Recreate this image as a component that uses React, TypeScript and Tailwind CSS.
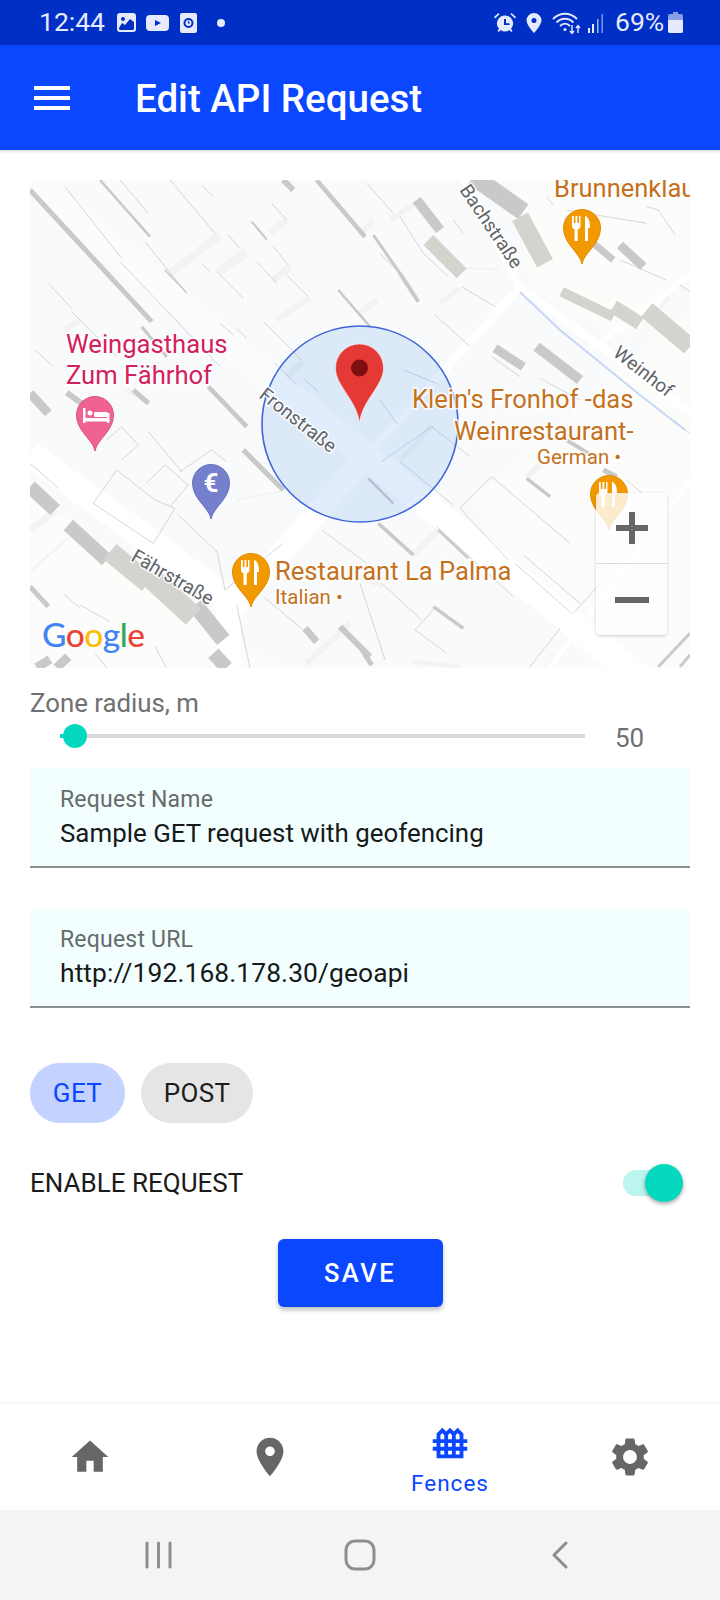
import React from "react";

// Map geometry is noted in each reference crop's own coordinates and converted to map space.
type L = [number, number, number, number, number?];
const conv = (ox: number, oy: number) => (l: L): L => [l[0] / 3 + ox, l[1] / 3 + oy, l[2] / 3 + ox, l[3] / 3 + oy, l[4]];
const tl = conv(-10, -10), tr = conv(330, -10), bl = conv(-10, 240), br = conv(330, 240);

const softRoads: L[] = [[0, 0, 240, 198, 26]];
const roads: L[] = [
  [240, 198, 610, 498, 26],
  [0, 274, 205, 424, 26],
  [200, 432, 342, 270, 22],
  [342, 270, 490, 107, 8],
  [490, 107, 432, -5, 8],
  [490, 107, 670, 240, 8],
  [560, 170, 660, 95, 5],
  [197, 420, 200, 490, 24],
  [660, 300, 520, 488, 4],
];
const walls: L[] = [
  ...[[450, 310, 600, 195, 8], [595, 305, 680, 245, 9], [750, 190, 800, 150, 7], [760, 330, 810, 290, 7], [770, 450, 870, 385, 6], [130, 480, 180, 450, 6], [320, 660, 390, 700, 5], [800, 620, 850, 575, 6]].map((l) => tl(l as L)),
  ...[[0, 195, 40, 150, 6], [50, 390, 0, 430, 6], [180, 90, 90, 150, 5], [300, 355, 240, 400, 5], [305, 295, 420, 298, 2], [890, 430, 925, 380, 4]].map((l) => tr(l as L)),
  ...[[30, 330, 110, 270, 7], [860, 730, 990, 610, 6], [35, 450, 150, 350, 2], [650, 240, 780, 215, 2]].map((l) => bl(l as L)),
  ...[[160, 405, 235, 330, 6], [500, 170, 540, 135, 6], [120, 120, 215, 20, 5], [0, 470, 70, 500, 5], [160, 725, 300, 740, 4]].map((l) => br(l as L)),
];
const thin: L[] = [
  ...[[135, 50, 305, 265], [300, 30, 385, 130], [450, 30, 585, 190], [375, 215, 500, 370], [545, 280, 570, 305], [590, 305, 670, 385], [625, 195, 660, 235], [730, 455, 845, 570], [800, 315, 865, 380], [710, 275, 770, 340], [760, 230, 805, 285], [695, 155, 740, 210], [755, 100, 800, 150], [300, 275, 600, 590], [85, 340, 155, 415], [155, 425, 290, 560], [45, 540, 95, 585], [850, 625, 895, 665], [765, 580, 830, 645], [545, 45, 580, 80], [600, 460, 640, 495], [650, 475, 680, 505]].map((l) => tl(l as L)),
  ...[[20, 40, 100, 130], [120, 140, 190, 250], [190, 250, 265, 320], [60, 250, 120, 310], [280, 150, 310, 190], [305, 350, 405, 410], [225, 435, 330, 530], [395, 560, 480, 620], [895, 120, 945, 195], [780, 270, 920, 330], [620, 120, 860, 160], [560, 80, 580, 105], [960, 345, 990, 365], [60, 690, 110, 760], [540, 625, 660, 690], [130, 600, 230, 640], [860, 110, 895, 120]].map((l) => tr(l as L)),
  ...[[30, 130, 115, 205], [220, 250, 290, 150], [290, 150, 405, 240], [405, 240, 465, 265], [220, 250, 400, 370], [400, 370, 465, 265], [378, 190, 435, 135], [435, 135, 505, 195], [505, 195, 450, 260], [470, 280, 590, 395], [385, 35, 485, 155], [480, 155, 575, 90], [575, 90, 620, 125], [260, 60, 305, 20], [305, 20, 355, 75], [305, 120, 355, 75], [130, 520, 180, 565], [180, 555, 270, 605], [905, 330, 1040, 430], [730, 530, 850, 630], [405, 680, 440, 743], [225, 700, 260, 743], [650, 555, 690, 743], [590, 390, 615, 510], [615, 510, 790, 370]].map((l) => bl(l as L)),
  ...[[65, 125, 215, 20], [215, 20, 330, 110], [120, 125, 280, 255], [395, 170, 630, 370], [300, 265, 395, 170], [490, 405, 660, 550], [465, 430, 635, 580], [640, 580, 900, 290], [165, 630, 260, 700], [65, 490, 185, 600], [0, 490, 75, 720], [600, 625, 510, 740], [300, 265, 445, 420], [230, 320, 460, 530], [165, 630, 220, 570], [940, 0, 990, 40], [800, 180, 910, 275]].map((l) => br(l as L)),
];
const shadows: [string, L[]][] = [
  ["#c8c9c8", [
    ...[[30, 60, 395, 455, 5], [240, 30, 390, 200, 2.5], [890, 30, 1035, 200, 4.5], [565, 650, 680, 770, 4.5], [955, 360, 1050, 470, 2.5], [30, 670, 85, 730, 9], [790, 30, 820, 60, 6], [695, 155, 740, 208, 2], [435, 300, 500, 368, 1.5], [365, 470, 440, 560, 3], [140, 668, 185, 700, 6], [340, 660, 385, 700, 5]].map((l) => tl(l as L)),
    ...[[170, 90, 240, 180, 10], [40, 195, 120, 310, 3], [120, 310, 175, 395, 4], [340, 20, 490, 125, 18], [405, 535, 490, 590, 9], [530, 530, 660, 630, 10], [700, 220, 760, 270, 7], [780, 225, 850, 290, 9]].map((l) => tr(l as L)),
    ...[[30, 200, 105, 270, 14], [145, 315, 260, 420, 14], [525, 555, 610, 660, 16], [580, 700, 620, 743, 14], [30, 500, 85, 560, 5], [670, 90, 790, 210, 5], [855, 625, 890, 665, 7], [960, 620, 1050, 710, 6], [50, 743, 90, 718, 9], [110, 743, 145, 710, 9]].map((l) => bl(l as L)),
    ...[[25, 175, 100, 250, 2.5], [55, 310, 160, 405, 3.5], [235, 330, 325, 415, 2.5], [220, 560, 310, 625, 3.5], [500, 175, 570, 230, 3.5], [730, 150, 770, 170, 5], [0, 680, 35, 735, 5], [895, 740, 990, 640, 3], [960, 740, 990, 705, 3], [620, 60, 700, 110, 4]].map((l) => br(l as L)),
  ]],
  ["#d5d3ce", [
    ...[[205, 210, 305, 310, 14], [480, 140, 555, 280, 18], [605, 365, 760, 440, 10], [760, 410, 840, 460, 14], [860, 420, 990, 530, 18]].map((l) => tr(l as L)),
    ...[[270, 395, 385, 490, 20], [390, 470, 520, 590, 22]].map((l) => bl(l as L)),
  ]],
];

function Pin({ x, y, tip, fill, edge, children }: { x: number; y: number; tip: number; fill: string; edge: string; children?: React.ReactNode }) {
  const r = 18.5;
  const h = tip - y;
  return (
    <g>
      <path
        d={`M${x} ${tip}C${x - 2} ${y + h * 0.68} ${x - r} ${y + h * 0.45} ${x - r} ${y}a${r} ${r} 0 0 1 ${2 * r} 0C${x + r} ${y + h * 0.45} ${x + 2} ${y + h * 0.68} ${x} ${tip}Z`}
        fill={fill}
        stroke={edge}
        strokeWidth="1"
      />
      {children}
    </g>
  );
}

const Fork = ({ x, y }: { x: number; y: number }) => (
  <g fill="#fff" transform={`translate(${x} ${y})`}>
    <path d="M-10-12h1.8v7h1.7v-7h1.8v7h1.7v-7h1.5v10c0 2-1.2 3-2.8 3.3V13h-3.2V1.3C-8.8 1-10 0-10-2Z" />
    <path d="M3-12c4 1 5 6 5 12H6v13H3Z" />
  </g>
);

function Label({ x, y, size, fill, rot, children, weight = 400 }: { x: number; y: number; size: number; fill: string; rot?: number; weight?: number; children: React.ReactNode }) {
  return (
    <text
      x={x}
      y={y}
      fontSize={size}
      fontWeight={weight}
      fill={fill}
      stroke="#fff"
      strokeWidth="3"
      strokeOpacity="0.85"
      paintOrder="stroke"
      fontFamily="Roboto, sans-serif"
      transform={rot ? `rotate(${rot} ${x} ${y})` : undefined}
    >
      {children}
    </text>
  );
}

function MapArt() {
  const drawLines = (ls: L[], stroke: string, w = 1) =>
    ls.map((l, i) => <line key={i} x1={l[0]} y1={l[1]} x2={l[2]} y2={l[3]} stroke={stroke} strokeWidth={l[4] ?? w} />);
  return (
    <svg viewBox="0 0 660 488" width="660" height="488" className="block">
      <rect width="660" height="488" fill="#f9fafb" />
      <path d="M0 310L200 460 260 488H0ZM440 320L660 130V488H560Z" fill="#fcfcfb" />
      <path d="M480 0H660V90L600 160 500 110Z" fill="#fcfcfa" />
      {drawLines(softRoads, "#fcfcfd")}
      {drawLines(roads, "#ffffff")}
      {drawLines(walls, "#f2f3f2")}
      {drawLines(thin, "#c2c5c7", 0.7)}
      {shadows.map(([c, ls]) => <g key={c}>{drawLines(ls, c)}</g>)}
      <path d="M490 112L530 150 610 215 655 250" fill="none" stroke="#c6d7f5" strokeWidth="2" />

      <circle cx="330" cy="244" r="98" fill="#69a5f5" fillOpacity="0.2" stroke="#3f66d9" strokeWidth="1.6" />
      <path d="M329.5 243C327 220 305.5 206 305.5 188a24 24 0 0 1 48 0C353.5 206 332 220 329.5 243Z" fill="#e53935" stroke="#fff" strokeOpacity="0.5" strokeWidth="1" />
      <circle cx="329.5" cy="188" r="8.500" fill="#7d0f0f" />

      <Label x={36} y={173} size={25.6} fill="#d3215e">Weingasthaus</Label>
      <Label x={36} y={204} size={25.6} fill="#d3215e">Zum Fährhof</Label>
      <Label x={524} y={17} size={25.5} fill="#c5711c">Brunnenklau</Label>
      <Label x={382} y={228} size={25.6} fill="#c5711c">Klein's Fronhof -das</Label>
      <Label x={424} y={260} size={25.6} fill="#c5711c">Weinrestaurant-</Label>
      <Label x={507} y={284} size={20.5} fill="#c5711c">German •</Label>
      <Label x={245} y={400} size={25.6} fill="#c5711c">Restaurant La Palma</Label>
      <Label x={245} y={424} size={20.5} fill="#c5711c">Italian •</Label>

      <Label x={228} y={217} size={19} fill="#5f6368" rot={38}>Fronstraße</Label>
      <Label x={429} y={10} size={19} fill="#5f6368" rot={56}>Bachstraße</Label>
      <Label x={582} y={175} size={19} fill="#5f6368" rot={38}>Weinhof</Label>
      <Label x={100} y={380} size={19} fill="#5f6368" rot={30}>Fährstraße</Label>

      <Pin x={65} y={235} tip={271} fill="#f06292" edge="#d9537f">
        <g fill="#fff">
          <rect x={53} y={228} width={2.5} height={15} />
          <rect x={77} y={233} width={2.5} height={10} />
          <rect x={53} y={238} width={26} height={3.5} />
          <circle cx={60} cy={233} r={2.5} />
          <rect x={64} y={232} width={14} height={5} rx={1.5} />
        </g>
      </Pin>
      <Pin x={181} y={303} tip={339} fill="#7580cc" edge="#6670bd">
        <text x={181} y={312} textAnchor="middle" fontSize="26" fontWeight="700" fill="#fff" fontFamily="Roboto, sans-serif">€</text>
      </Pin>
      <Pin x={221} y={392} tip={427} fill="#f29900" edge="#e08c00"><Fork x={221} y={392} /></Pin>
      <Pin x={552} y={48} tip={84} fill="#f29900" edge="#e08c00"><Fork x={552} y={48} /></Pin>
      <Pin x={579} y={314} tip={350} fill="#f29900" edge="#e08c00"><Fork x={579} y={314} /></Pin>

      <text x={12} y={467} fontSize="33.500" fontWeight="500" fontFamily="Lato, Roboto, sans-serif" stroke="#fff" strokeOpacity="0.7" strokeWidth="3" paintOrder="stroke" letterSpacing="-0.5">
        <tspan fill="#4285f4">G</tspan>
        <tspan fill="#ea4335">o</tspan>
        <tspan fill="#fbbc05">o</tspan>
        <tspan fill="#4285f4">g</tspan>
        <tspan fill="#34a853">l</tspan>
        <tspan fill="#ea4335">e</tspan>
      </text>
    </svg>
  );
}

const Path = ({ d, size, fill, className }: { d: string; size: number; fill: string; className?: string }) => (
  <svg viewBox="0 0 24 24" width={size} height={size} fill={fill} className={className}><path d={d} /></svg>
);

const HOME = "M10 20v-6h4v6h5v-8h3L12 3 2 12h3v8z";
const PLACE = "M12 2C8.13 2 5 5.13 5 9c0 5.25 7 13 7 13s7-7.75 7-13c0-3.87-3.13-7-7-7zm0 9.5c-1.38 0-2.5-1.12-2.5-2.5s1.12-2.5 2.5-2.5 2.5 1.12 2.5 2.5-1.12 2.5-2.5 2.5z";
const FENCE = "M21,12v-2h-2V7l-3-3l-2,2l-2-2l-2,2L8,4L5,7v3H3v2h2v2H3v2h2v4h14v-4h2v-2h-2v-2H21z M16,6.83l1,1V10h-2V7.83l0.41-0.41L16,6.83z M12,6.83l1,1V10h-2V7.83L12,6.83z M11,14v-2h2v2H11z M13,16v2h-2v-2H13z M9,12v2H7v-2H9z M9,7.83V10H7V7.83l1-1l0.59,0.59L9,7.83z M7,16h2v2H7V16z M17,18h-2v-2h2V18z M17,14h-2v-2h2V14z";
const GEAR = "M19.14 12.94c.04-.3.06-.61.06-.94 0-.32-.02-.64-.07-.94l2.03-1.58c.18-.14.23-.41.12-.61l-1.92-3.32c-.12-.22-.37-.29-.59-.22l-2.39.96c-.5-.38-1.03-.7-1.62-.94l-.36-2.54c-.04-.24-.24-.41-.48-.41h-3.84c-.24 0-.43.17-.47.41l-.36 2.54c-.59.24-1.13.57-1.62.94l-2.39-.96c-.22-.08-.47 0-.59.22L2.74 8.87c-.12.21-.08.47.12.61l2.03 1.58c-.05.3-.09.63-.09.94s.02.64.07.94l-2.03 1.58c-.18.14-.23.41-.12.61l1.92 3.32c.12.22.37.29.59.22l2.39-.96c.5.38 1.03.7 1.62.94l.36 2.54c.05.24.24.41.48.41h3.84c.24 0 .44-.17.47-.41l.36-2.54c.59-.24 1.13-.56 1.62-.94l2.39.96c.22.08.47 0 .59-.22l1.92-3.32c.12-.22.07-.47-.12-.61l-2.01-1.58zM12 15.6c-1.98 0-3.6-1.62-3.6-3.6s1.62-3.6 3.6-3.6 3.6 1.62 3.6 3.6-1.62 3.6-3.6 3.6z";

function Field({ label, value, wide }: { label: string; value: string; wide?: boolean }) {
  return (
    <div className="h-[100px] rounded-t-[5px] border-b-2 border-[#8a8f8f] bg-[#f3ffff] px-[30px] pt-[19px]">
      <div className="text-[23px] leading-[25px] tracking-[0.2px] text-[#666b6b]">{label}</div>
      <div className={wide ? "mt-[5px] text-[26.4px] leading-[32px] tracking-[0.1px] text-[#161a1a]" : "mt-[5px] text-[25.9px] leading-[32px] text-[#161a1a]"}>{value}</div>
    </div>
  );
}

function StatusBar() {
  const c = "#e6eaff";
  return (
    <div className="flex h-[45px] items-center justify-between bg-[#002fc6] pl-[39px] pr-[37px] text-[26.5px] text-[#e6eaff]">
      <div className="flex items-center">
        <span className="w-[78px] leading-none">12:44</span>
        <svg width="19" height="19" viewBox="0 0 19 19" fill={c}><path fillRule="evenodd" d="M3 0h13a3 3 0 0 1 3 3v13a3 3 0 0 1-3 3H3a3 3 0 0 1-3-3V3a3 3 0 0 1 3-3Zm-1 15v1l1 1h13l1-1V9l-4-3-5 6-3-2Zm4-11a2 2 0 1 0 0 4 2 2 0 0 0 0-4Z" /></svg>
        <svg width="23" height="16" viewBox="0 0 23 16" className="ml-[10px]" fill={c}><path fillRule="evenodd" d="M4 0h15a4 4 0 0 1 4 4v8a4 4 0 0 1-4 4H4a4 4 0 0 1-4-4V4a4 4 0 0 1 4-4Zm5 5v6l6-3Z" /></svg>
        <svg width="17" height="20" viewBox="0 0 17 20" className="ml-[11px]" fill={c}><path fillRule="evenodd" d="M2 0h13a2 2 0 0 1 2 2v16a2 2 0 0 1-2 2H2a2 2 0 0 1-2-2V2a2 2 0 0 1 2-2Zm6.500 5a5 5 0 1 0 0 10 5 5 0 0 0 0-10Zm0 2a3 3 0 1 1 0 6 3 3 0 0 1 0-6Zm-.6 1v2.600h2.200v-1H9V8Z" /></svg>
        <span className="ml-[20px] h-[8px] w-[8px] rounded-full bg-[#e6eaff]" />
      </div>
      <div className="flex items-center">
        <svg width="22" height="22" viewBox="0 0 22 22" fill={c}><path fillRule="evenodd" d="M11 3.500a8 8 0 0 1 6 13.300l1.500 2.200-1.500 1-1.500-2a8 8 0 0 1-9 0L5 20l-1.500-1L5 16.800A8 8 0 0 1 11 3.500Zm-1 3.500v6h5.500v-1.800H12V7ZM1 6.500 5.500 2.200 4.500 1 0 5Zm20 0L16.500 2.200 17.500 1 22 5Z" /></svg>
        <svg width="16" height="22" viewBox="0 0 16 22" className="ml-[10px]" fill={c}><path fillRule="evenodd" d="M8 1a7.500 7.500 0 0 1 7.500 7.500C15.500 13 8 21 8 21S.5 13 .5 8.500A7.500 7.500 0 0 1 8 1Zm0 5a2.500 2.500 0 1 0 0 5 2.500 2.500 0 0 0 0-5Z" /></svg>
        <svg width="30" height="24" viewBox="0 0 30 24" className="ml-[10px]" fill="none" stroke={c} strokeWidth="1.800"><path d="M1 8c7-7 17-7 24 0M4.500 11.500c5-5 12-5 17 0M8 15c3-3 7-3 10 0" /><circle cx="13" cy="18.500" r="1.500" fill={c} stroke="none" /><path d="M20 14v8M18 20l2 2.500 2-2.500M26 22v-7M24 17l2-2.500 2 2.500" strokeWidth="1.400" /></svg>
        <svg width="18" height="20" viewBox="0 0 18 20" className="ml-[6px]" fill={c}><rect x="0" y="15" width="2" height="5" /><rect x="4" y="11" width="2" height="9" /><rect x="9" y="6" width="1.500" height="14" fillOpacity="0.7" /><rect x="13.500" y="1" width="1.500" height="19" fillOpacity="0.55" /></svg>
        <span className="ml-[9px] w-[53px] leading-none">69%</span>
        <svg width="15" height="21" viewBox="0 0 15 21" fill={c}><path d="M5 0h5v2h3a2 2 0 0 1 2 2v15a2 2 0 0 1-2 2H2a2 2 0 0 1-2-2V4a2 2 0 0 1 2-2h3Z" fillOpacity="0.6" /><path d="M0 8h15v11a2 2 0 0 1-2 2H2a2 2 0 0 1-2-2Z" /></svg>
      </div>
    </div>
  );
}

export default function App() {
  return (
    <div className="flex h-[1600px] w-[720px] flex-col overflow-hidden bg-white [font-family:Roboto,sans-serif]">
      <StatusBar />
      <header className="relative z-10 flex h-[105px] items-center bg-[#0a47ff] pl-[34px] shadow-[0_1px_3px_rgba(0,0,0,0.2)]">
        <div className="flex h-[24px] w-[36px] flex-col justify-between">
          <span className="h-[4px] bg-white" />
          <span className="h-[4px] bg-white" />
          <span className="h-[4px] bg-white" />
        </div>
        <h1 className="ml-[65px] mt-[4px] text-[38.5px] font-medium leading-none text-white">Edit API Request</h1>
      </header>

      <main className="flex-1 px-[30px] pt-[30px]">
        <div className="relative h-[488px] w-[660px] overflow-hidden">
          <MapArt />
          <div className="absolute left-[566px] top-[313px] flex h-[142px] w-[71px] flex-col rounded-[4px] bg-white/80 shadow-[0_1px_3px_rgba(0,0,0,0.2)]">
            <div className="flex h-[71px] items-center justify-center border-b border-[#dddddd]">
              <svg width="34" height="34" viewBox="0 0 34 34" fill="#666666"><path d="M14 1h6v13h13v6H20v13h-6V20H1v-6h13Z" /></svg>
            </div>
            <div className="flex flex-1 items-center justify-center">
              <svg width="34" height="6" viewBox="0 0 34 6" fill="#666666"><rect width="34" height="6" /></svg>
            </div>
          </div>
        </div>

        <div className="mt-[21px] text-[25.8px] leading-[28px] text-[#707070]">Zone radius, m</div>
        <div className="relative h-[30px]">
          <div className="absolute left-[30px] top-[17px] h-[4px] w-[525px] bg-[#d9d9d9]" />
          <div className="absolute left-[30px] top-[17px] h-[4px] w-[15px] bg-[#04d9c0]" />
          <div className="absolute left-[33px] top-[7px] h-[24px] w-[24px] rounded-full bg-[#04d9c0]" />
          <div className="absolute left-[585px] top-[7px] text-[26px] leading-[28px] text-[#707070]">50</div>
        </div>

        <div className="mt-[21px]"><Field label="Request Name" value="Sample GET request with geofencing" /></div>
        <div className="mt-[40px]"><Field label="Request URL" value="http://192.168.178.30/geoapi" wide /></div>

        <div className="mt-[55px] flex gap-[16px]">
          <div className="flex h-[60px] w-[95px] items-center justify-center rounded-full bg-[#c3d2ff] text-[26px] tracking-[0.4px] text-[#0a47ff]">GET</div>
          <div className="flex h-[60px] w-[112px] items-center justify-center rounded-full bg-[#e5e5e5] text-[26px] tracking-[0.3px] text-[#1c1c1c]">POST</div>
        </div>

        <div className="mt-[41px] flex h-[38px] items-center justify-between pr-[7px]">
          <span className="text-[26px] text-[#1a1a1a]">ENABLE REQUEST</span>
          <div className="relative h-[38px] w-[60px]">
            <div className="absolute left-0 top-[6px] h-[26px] w-[44px] rounded-full bg-[#bcf5ee]" />
            <div className="absolute right-0 top-0 h-[38px] w-[38px] rounded-full bg-[#04d9c0] shadow-[0_2px_4px_rgba(0,0,0,0.35)]" />
          </div>
        </div>

        <div className="mt-[37px] flex justify-center">
          <div className="flex h-[68px] w-[165px] items-center justify-center rounded-[6px] bg-[#0a47ff] text-[25.5px] font-medium tracking-[2.500px] text-white shadow-[0_3px_4px_rgba(0,0,0,0.25)]">SAVE</div>
        </div>
      </main>

      <nav className="grid h-[106px] grid-cols-4 bg-white shadow-[0_-2px_3px_rgba(0,0,0,0.04)]">
        <div className="flex items-center justify-center"><Path d={HOME} size={44} fill="#666666" /></div>
        <div className="flex items-center justify-center"><Path d={PLACE} size={46} fill="#666666" /></div>
        <div className="flex flex-col items-center pt-[16px]">
          <Path d={FENCE} size={46} fill="#0a47ff" />
          <span className="mt-[5px] text-[22.5px] leading-[24px] tracking-[1px] text-[#0a47ff]">Fences</span>
        </div>
        <div className="flex items-center justify-center"><Path d={GEAR} size={46} fill="#666666" /></div>
      </nav>

      <div className="grid h-[90px] grid-cols-3 items-center bg-[#f4f4f4]">
        <div className="flex justify-center pl-[76px]">
          <svg width="27" height="28" viewBox="0 0 27 28" stroke="#8e8e8e" strokeWidth="3" strokeLinecap="round"><path d="M2 2v24M13.500 2v24M25 2v24" /></svg>
        </div>
        <div className="flex justify-center">
          <svg width="32" height="32" viewBox="0 0 32 32" fill="none" stroke="#8e8e8e" strokeWidth="3"><rect x="2" y="2" width="28" height="28" rx="9" /></svg>
        </div>
        <div className="flex justify-center pr-[80px]">
          <svg width="18" height="28" viewBox="0 0 18 28" fill="none" stroke="#8e8e8e" strokeWidth="3" strokeLinecap="round" strokeLinejoin="round"><path d="M15 2 3 14l12 12" /></svg>
        </div>
      </div>
    </div>
  );
}
